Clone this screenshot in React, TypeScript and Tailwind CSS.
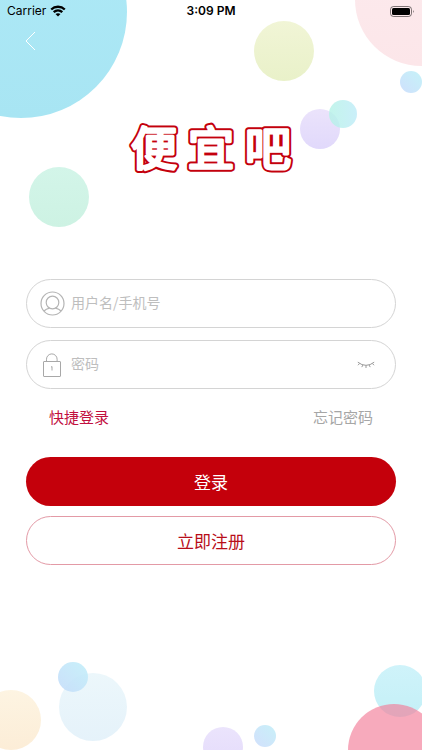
import React from 'react';

const topBubbles = [
  'left-[-85px] top-[-94px] size-[212px] bg-linear-to-b from-[#aeeaf7] to-[#a8e5f3]',
  'right-[108px] top-[21px] size-[60px] bg-linear-to-b from-[#f1f5d6] to-[#e9f1c9]',
  'right-[-66px] top-[-67px] size-[133px] bg-linear-to-b from-[#fcebee] to-[#fce6e9]',
  'right-0 top-[71px] size-[22px] bg-linear-to-tr from-[#cfe0fc] to-[#c5f2f8]',
  'right-[82px] top-[109px] size-[40px] bg-linear-to-b from-[#ebe3fb] to-[#e1d9fb]',
  'right-[65px] top-[100px] size-[28px] bg-linear-to-r from-[#b4f2e6]/80 to-[#bdebf8]/80',
  'left-[29px] top-[167px] size-[60px] bg-linear-to-b from-[#d3f5e9] to-[#cdf2e3]',
];

const bottomBubbles = [
  'left-[-19px] bottom-0 size-[60px] bg-linear-to-b from-[#fdf4e2] to-[#fcedd7]',
  'left-[59px] bottom-[9px] size-[68px] bg-linear-to-b from-[#ecf7fb] to-[#e5f2fa]',
  'left-[58px] bottom-[58px] size-[30px] bg-linear-to-tr from-[#c5dcfa]/90 to-[#c2eff9]/90',
  'left-[203px] bottom-[-17px] size-[40px] bg-linear-to-b from-[#ebe4fc] to-[#e4dbfb]',
  'left-[254px] bottom-[3px] size-[22px] bg-linear-to-tr from-[#d2e0fc] to-[#c8f0f8]',
  'right-[-4px] bottom-[33px] size-[52px] bg-linear-to-b from-[#cff3fa] to-[#c4f0f7]',
  'right-[-18px] bottom-[-46px] size-[92px] bg-[#f27d98]/65',
];

function StatusBar() {
  return (
    <header className="relative flex h-[22px] items-center justify-between px-[7px] font-[Inter,sans-serif] text-xs text-black">
      <div className="flex flex-1 items-center gap-1">
        <span>Carrier</span>
        <svg className="h-[12px] w-[16px]" viewBox="0 0 16 12" fill="none" stroke="currentColor" strokeWidth="2.3" aria-hidden="true">
          <path d="M1.2 4.5C5 .8 11 .8 14.8 4.5" />
          <path d="M3.7 7.2C6.2 4.9 9.8 4.9 12.3 7.2" />
          <path d="M8 11.5 5.5 9.1Q8 7.2 10.5 9.1Z" fill="currentColor" stroke="none" />
        </svg>
      </div>
      <time className="font-semibold">3:09 PM</time>
      <div className="flex flex-1 justify-end">
        <svg className="h-[11px] w-[25px]" viewBox="0 0 25 11" aria-hidden="true">
          <rect x=".5" y=".5" width="21" height="10" rx="3" fill="none" stroke="#000" strokeOpacity=".5" />
          <rect x="2" y="2" width="18" height="7" rx="1.5" />
          <path d="M23 4Q24.5 5.5 23 7Z" fillOpacity=".6" />
        </svg>
      </div>
    </header>
  );
}

function Logo() {
  return (
    <svg className="h-[56px] w-[172px]" viewBox="0 0 172 56" role="img" aria-label="便宜吧" strokeLinejoin="round">
      <defs>
        <text id="logo-word" x="6 63 120" y="45" fontSize="46" fontWeight="400">
          便宜吧
        </text>
      </defs>
      <use href="#logo-word" fill="#c4000c" stroke="#c4000c" strokeWidth="7" />
      <use href="#logo-word" fill="#fff" stroke="#fff" strokeWidth="3" />
    </svg>
  );
}

export default function App() {
  return (
    <div className="relative flex min-h-screen flex-col overflow-hidden bg-white font-['Noto_Sans_CJK_SC',sans-serif]">
      <div aria-hidden="true">
        {topBubbles.map((b) => (
          <span key={b} className={`absolute rounded-full ${b}`} />
        ))}
        {bottomBubbles.map((b) => (
          <span key={b} className={`absolute rounded-full ${b}`} />
        ))}
      </div>

      <StatusBar />

      <main className="relative flex flex-col">
        <button type="button" aria-label="返回" className="ml-[18px] flex h-[38px] w-[24px] items-center justify-center text-white">
          <svg className="h-[20px] w-[12px]" viewBox="0 0 12 20" fill="none" stroke="currentColor" strokeWidth="1" aria-hidden="true">
            <path d="M11 1 2 10l9 9" />
          </svg>
        </button>

        <h1 className="mt-[60px] flex justify-center">
          <Logo />
        </h1>

        <form className="mt-[103px] flex flex-col px-[26px]" onSubmit={(e) => e.preventDefault()}>
          <label className="flex h-[49px] items-center rounded-full border border-[#d4d4d4] bg-white px-3">
            <svg className="size-[26px] text-[#b4b4b4]" viewBox="0 0 26 26" fill="none" stroke="currentColor" strokeWidth="1.2" aria-hidden="true">
              <circle cx="13.5" cy="12.5" r="11.5" />
              <circle cx="13.5" cy="11.5" r="6.3" />
              <path d="M5 20Q7 17.9 10.5 17.1M16.5 17.1q3.5.8 5.5 2.9" />
            </svg>
            <input type="text" aria-label="用户名/手机号" placeholder="用户名/手机号" className="ml-[6px] min-w-0 flex-1 bg-transparent pb-[3px] text-sm text-[#333] outline-none placeholder:text-[#bebebe]" />
          </label>

          <div className="mt-3 flex h-[49px] items-center rounded-full border border-[#d4d4d4] bg-white px-3">
            <svg className="size-[26px] text-[#a8a8a8]" viewBox="0 0 26 26" fill="none" stroke="currentColor" strokeWidth="1" aria-hidden="true">
              <rect x="4.5" y="9.5" width="17" height="15" rx=".5" />
              <path d="M7.5 9.5V7.2a5.3 5.3 0 0 1 10.6 0v2.3M13 14.5v4M12 15.2l1-.7" />
            </svg>
            <input type="password" aria-label="密码" placeholder="密码" className="ml-[6px] min-w-0 flex-1 bg-transparent pb-[3px] text-sm text-[#333] outline-none placeholder:text-[#bebebe]" />
            <button type="button" aria-label="显示密码" className="mr-2 text-[#999]">
              <svg className="h-[8px] w-[18px]" viewBox="0 0 18 8" fill="none" stroke="currentColor" strokeWidth="1" aria-hidden="true">
                <path d="M.8 1.2Q9 7.5 17.2 1.2M2.6 2.5 1 4.2M5.8 4.1 4.8 6.1M9 4.5V7M12.2 4.1l1 2M15.4 2.5 17 4.2" />
              </svg>
            </button>
          </div>

          <div className="mt-4 flex h-6 items-center justify-between px-[23px] text-[15px] leading-6">
            <a href="#quick" className="text-[#c2103f]">快捷登录</a>
            <a href="#forgot" className="text-[#a6a6a6]">忘记密码</a>
          </div>

          <button type="submit" className="mt-7 h-[49px] rounded-full bg-[#c4000b] text-[17px] text-white">登录</button>
          <button type="button" className="mt-[10px] h-[49px] rounded-full border border-[#e39aa6] bg-white text-[17px] text-[#b80d19]">立即注册</button>
        </form>
      </main>
    </div>
  );
}
